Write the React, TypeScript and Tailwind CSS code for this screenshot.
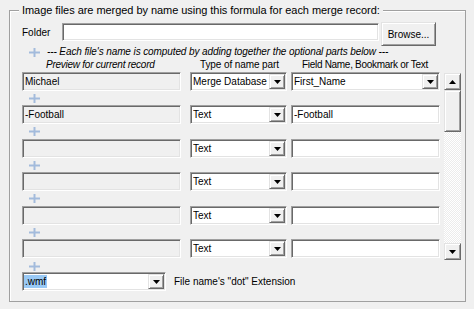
import React from "react"

const sunken =
  "border border-t-[#a0a0a0] border-l-[#a0a0a0] border-b-white border-r-white shadow-[inset_1px_1px_0_#696969,inset_-1px_-1px_0_#e3e3e3]"
const raised =
  "border border-t-[#e3e3e3] border-l-[#e3e3e3] border-b-[#696969] border-r-[#696969] shadow-[inset_1px_1px_0_#ffffff,inset_-1px_-1px_0_#a0a0a0] bg-[#f0f0f0]"

function Plus() {
  return (
    <svg width="11" height="9" viewBox="0 0 11 9" className="block">
      <rect x="0" y="3.5" width="11" height="2" fill="#a3bbdc" />
      <rect x="4.5" y="0" width="2" height="9" fill="#a3bbdc" />
    </svg>
  )
}

function Arrow({ up }: { up?: boolean }) {
  return (
    <svg width="7" height="4" viewBox="0 0 7 4" className="block">
      <polygon points={up ? "0,4 7,4 3.5,0" : "0,0 7,0 3.5,4"} fill="#000" />
    </svg>
  )
}

function DropButton() {
  return (
    <div className={`${raised} w-[16px] h-[15px] flex items-center justify-center shrink-0`}>
      <Arrow />
    </div>
  )
}

function Combo({ value, width }: { value: string; width: string }) {
  return (
    <div className={`${sunken} ${width} h-[19px] bg-white flex items-center justify-between pl-[2px] pr-[1px]`}>
      <span className="flex-1 overflow-hidden whitespace-nowrap leading-none">{value}</span>
      <DropButton />
    </div>
  )
}

const rows = [
  { preview: "Michael", type: "Merge Database", field: "First_Name", combo: true },
  { preview: "-Football", type: "Text", field: "-Football" },
  { preview: "", type: "Text", field: "" },
  { preview: "", type: "Text", field: "" },
  { preview: "", type: "Text", field: "" },
  { preview: "", type: "Text", field: "" },
]

// spacer heights between rows, alternating to keep the 33.4px pitch
const gaps = ["h-[14px]", "h-[15px]", "h-[14px]", "h-[15px]", "h-[14px]"]

export default function App() {
  return (
    <div
      className="w-[474px] h-[309px] bg-[#f0f0f0] pt-[4px] pl-[9px] text-[10px] text-black overflow-hidden"
      style={{ fontFamily: '"Liberation Sans", Arial, sans-serif' }}
    >
      <fieldset className="w-[457px] h-[298px] border border-[#a0a0a0] shadow-[inset_1px_1px_0_#ffffff] pl-[12px]">
        <legend className="-ml-[3px] px-[3px] text-[11px] tracking-[-0.05px] leading-[13px] bg-[#f0f0f0]">
          Image files are merged by name using this formula for each merge record:
        </legend>

        <div className="flex items-start mt-[5px] h-[24px]">
          <span className="w-[40px] mt-[4px] leading-[13px]">Folder</span>
          <div className={`${sunken} w-[317px] h-[18px] mt-[1px] bg-white`} />
          <button className={`${raised} ml-[2px] w-[55px] h-[24px] text-[10px]`}>Browse...</button>
        </div>

        <div className="flex items-center h-[12px]">
          <div className="ml-[7px] w-[18px] shrink-0">
            <Plus />
          </div>
          <span className="italic leading-none whitespace-nowrap tracking-[-0.1px]">
            --- Each file's name is computed by adding together the optional parts below ---
          </span>
        </div>

        <div className="flex items-center h-[12px] mb-[2px] whitespace-nowrap">
          <span className="italic w-[178px] pl-[24px] shrink-0 tracking-[-0.25px]">Preview for current record</span>
          <span className="w-[102px] shrink-0 tracking-[-0.1px]">Type of name part</span>
          <span className="tracking-[-0.3px]">Field Name, Bookmark or Text</span>
        </div>

        <div className="flex gap-[4px] h-[186px]">
          <div className="w-[418px] flex flex-col">
            {rows.map((r, i) => (
              <React.Fragment key={i}>
                <div className="flex h-[19px]">
                  <div className={`${sunken} w-[159px] h-[19px] bg-[#f0f0f0] pl-[2px] pt-[2px] leading-[13px]`}>
                    {r.preview}
                  </div>
                  <div className="ml-[9px]">
                    <Combo value={r.type} width="w-[97px]" />
                  </div>
                  <div className="ml-[4px]">
                    {r.combo ? (
                      <Combo value={r.field} width="w-[149px]" />
                    ) : (
                      <div className={`${sunken} w-[149px] h-[19px] bg-white pl-[2px] flex items-center leading-none`}>
                        {r.field}
                      </div>
                    )}
                  </div>
                </div>
                {i < gaps.length && (
                  <div className={`${gaps[i]} pl-[7px] pt-[3px]`}>
                    <Plus />
                  </div>
                )}
              </React.Fragment>
            ))}
          </div>

          <div className="w-[17px] mt-[1px] h-[187px] flex flex-col">
            <div className={`${raised} h-[17px] flex items-center justify-center`}>
              <Arrow up />
            </div>
            <div className={`${raised} h-[42px]`} />
            <div className="flex-1 bg-[repeating-conic-gradient(#ececec_0_25%,#ffffff_0_50%)] bg-[length:2px_2px]" />
            <div className={`${raised} h-[17px] flex items-center justify-center`}>
              <Arrow />
            </div>
          </div>
        </div>

        <div className="h-[14px] pl-[7px] pt-[4px]">
          <Plus />
        </div>

        <div className="flex items-center">
          <div className={`${sunken} w-[144px] h-[19px] bg-white flex items-center justify-between pl-[1px] pr-[1px]`}>
            <span className="bg-[#99c9f5] px-[1px] leading-[13px]">.wmf</span>
            <DropButton />
          </div>
          <span className="ml-[8px]">File name's "dot" Extension</span>
        </div>
      </fieldset>
    </div>
  )
}
